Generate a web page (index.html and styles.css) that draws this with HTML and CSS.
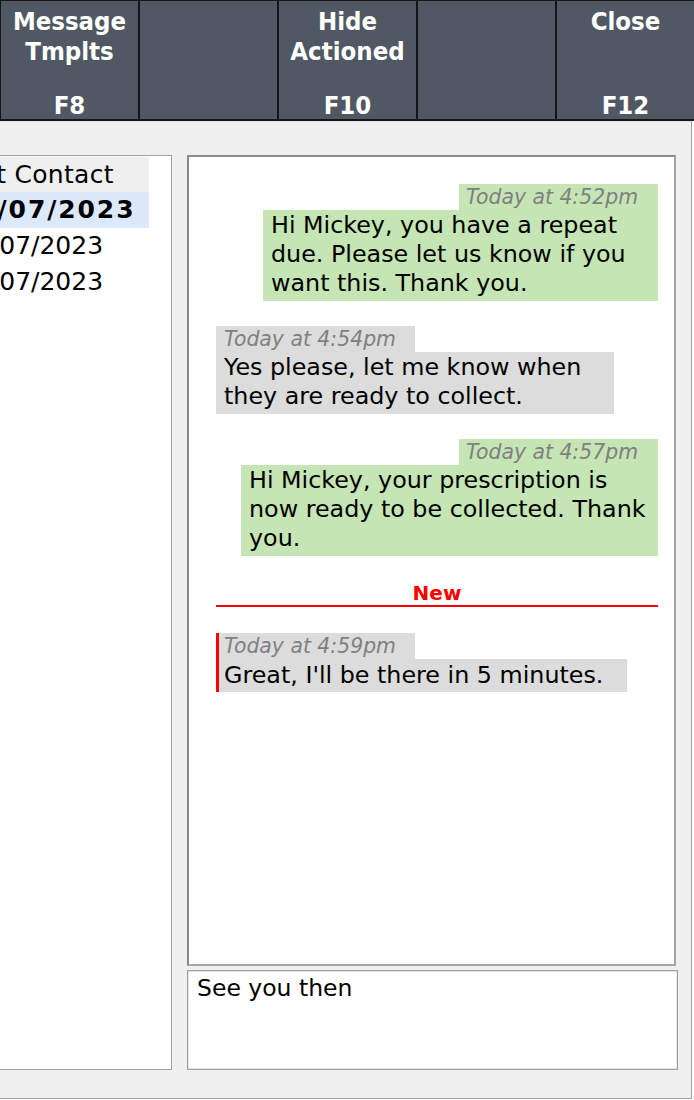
FILE: index.html
```html
<!DOCTYPE html>
<html lang="en">
<head>
<meta charset="UTF-8">
<meta name="viewport" content="width=device-width, initial-scale=1.0">
<title>Patient Messages</title>
<link rel="stylesheet" href="styles.css">
</head>
<body>

<div class="toolbar">
    <div class="fkey"><span class="label">Message<br>Tmplts</span><span class="key">F8</span></div>
    <div class="fkey"></div>
    <div class="fkey"><span class="label">Hide<br>Actioned</span><span class="key">F10</span></div>
    <div class="fkey"></div>
    <div class="fkey"><span class="label">Close</span><span class="key">F12</span></div>
</div>

<div class="main">
    <div class="patients">
        <div class="row head">Last Contact</div>
        <div class="row selected">12/07/2023</div>
        <div class="row">11/07/2023</div>
        <div class="row">10/07/2023</div>
    </div>

    <div class="chat_col">
        <div class="chat">
            <div class="msg out">
                <div class="stamp">Today at 4:52pm</div>
                <div class="text" style="width: 395px">Hi Mickey, you have a repeat due. Please let us know if you want this. Thank you.</div>
            </div>
            <div class="msg in">
                <div class="stamp">Today at 4:54pm</div>
                <div class="text" style="width: 398px">Yes please, let me know when they are ready to collect.</div>
            </div>
            <div class="msg out">
                <div class="stamp">Today at 4:57pm</div>
                <div class="text" style="width: 417px">Hi Mickey, your prescription is now ready to be collected. Thank you.</div>
            </div>

            <div class="new_line">New</div>

            <div class="msg in unread">
                <div class="stamp">Today at 4:59pm</div>
                <div class="text">Great, I'll be there in 5 minutes.</div>
            </div>
        </div>
        <div class="reply">See you then</div>
    </div>
</div>

</body>
</html>
```

FILE: styles.css
```css
body {
    margin: 0;
    width: 694px;
    background: #fff;
    font-family: "DejaVu Sans", Verdana, sans-serif;
    color: #000;
    overflow: hidden;
}

/* function key bar */
.toolbar {
    display: grid;
    grid-template-columns: repeat(5, 1fr);
    gap: 2px;
    height: 121px;
    box-sizing: border-box;
    padding: 1px 0 2px 1px;
    background: #161616;
}
.fkey {
    background: #505963;
    color: #fff;
    display: flex;
    flex-direction: column;
    justify-content: space-between;
    align-items: center;
    text-align: center;
    padding-top: 5px;
    font-family: "DejaVu Sans Condensed", "DejaVu Sans", sans-serif;
    font-stretch: condensed;
    font-weight: bold;
    font-size: 25.5px;
    line-height: 30px;
}
.key {
    margin-bottom: -1px;
}

.main {
    display: flex;
    width: 692px;
    height: 978px;
    box-sizing: border-box;
    padding: 34px 13px 28px 0;
    background: #f0f0f0;
    border-top: 1px solid #e2e2e2;
    border-right: 1px solid #a0a0a0;
    border-bottom: 1px solid #a0a0a0;
}

/* patient list, scrolled so only the last column shows */
.patients {
    flex: none;
    width: 232px;
    margin-left: -60px;
    margin-top: -1px;
    box-sizing: border-box;
    padding-top: 1px;
    background: #fff;
    border: 1px solid #a0a0a0;
    font-size: 25px;
}
.row {
    width: 208px;
    height: 36px;
    line-height: 36px;
    padding-left: 18px;
    box-sizing: border-box;
    white-space: nowrap;
}
.row.head {
    height: 35px;
    line-height: 35px;
    padding-left: 12px;
    letter-spacing: 0.3px;
    background: #efefef;
}
.row.selected {
    background: #dce9fa;
    font-weight: bold;
    letter-spacing: 1.9px;
}

.chat_col {
    flex: none;
    width: 491px;
    margin-left: 15px;
    margin-top: -1px;
    display: flex;
    flex-direction: column;
    gap: 4px;
}

.chat {
    height: 811px;
    margin-right: 2px;
    box-sizing: border-box;
    padding: 27px 16px 0 27px;
    background: #fff;
    border: 2px solid;
    border-color: #8a8a8a #a6a6a6 #a6a6a6 #8a8a8a;
}

.msg {
    display: flex;
    flex-direction: column;
    margin-bottom: 25px;
}
.msg.out {
    align-items: flex-end;
}
.msg.in {
    align-items: flex-start;
}
.msg.out .stamp,
.msg.out .text {
    background: #c5e5b4;
}
.msg.in .stamp,
.msg.in .text {
    background: #dcdcdc;
}

.stamp {
    font-style: italic;
    font-size: 20.4px;
    line-height: 26px;
    color: #808080;
    padding: 0 19px 0 8px;
    white-space: nowrap;
}
.msg.out .stamp {
    padding: 0 20px 0 7px;
}
.text {
    font-size: 23.8px;
    line-height: 29px;
    padding: 1px 6px 3px 8px;
    box-sizing: border-box;
    width: fit-content;
}

.msg.unread {
    border-left: 3px solid #ff0000;
}
.msg.unread .stamp,
.msg.unread .text {
    padding-left: 5px;
}
.msg.unread .text {
    padding-top: 2px;
    padding-right: 24px;
    padding-bottom: 2px;
}

.new_line {
    margin: 26px 0;
    color: #ff0000;
    font-weight: bold;
    font-size: 20px;
    line-height: 23px;
    text-align: center;
    border-bottom: 2px solid #ff0000;
}

.reply {
    height: 100px;
    box-sizing: border-box;
    padding: 3px 9px;
    background: #fff;
    border: 1px solid #a0a0a0;
    box-shadow: inset 0 0 0 1px #e4e4e4;
    font-size: 23.5px;
    line-height: 29px;
}
```
